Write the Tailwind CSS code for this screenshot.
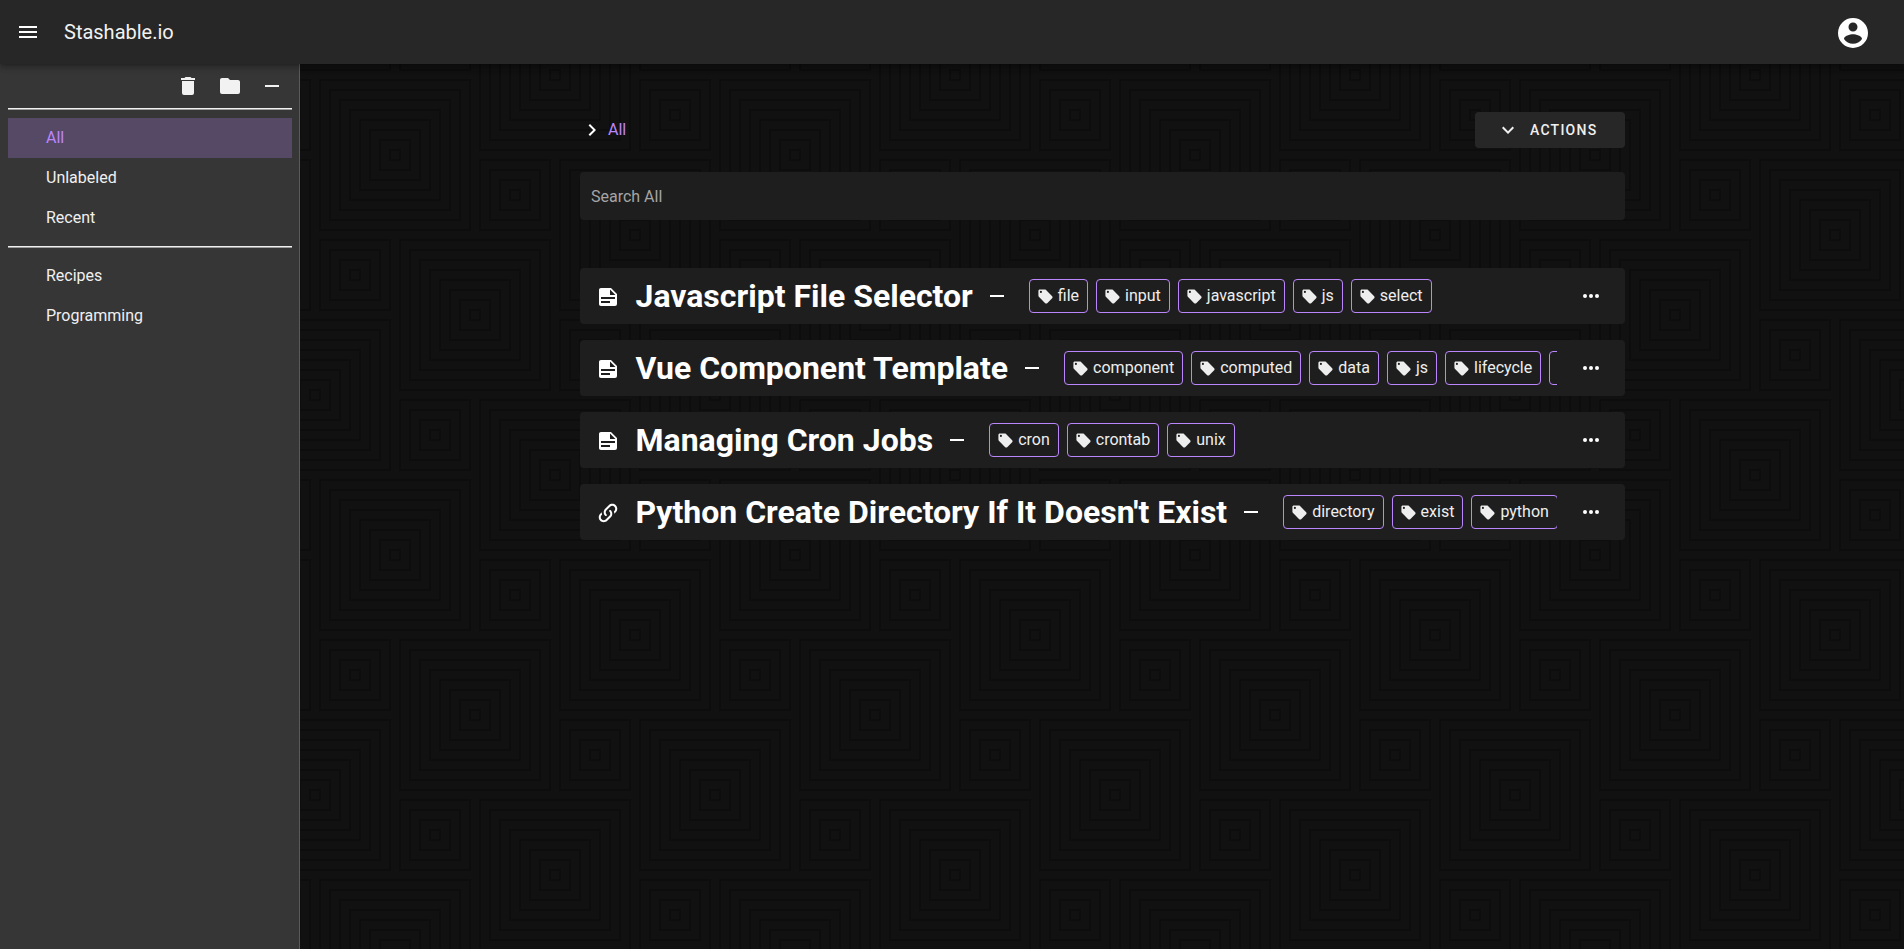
<!DOCTYPE html>
<html lang="en">
<head>
<meta charset="utf-8">
<title>Stashable.io</title>
<script src="https://cdn.jsdelivr.net/npm/@tailwindcss/browser@4"></script>
</head>
<body class="font-['Roboto',sans-serif] bg-[#111111] text-white">
<svg class="hidden" xmlns="http://www.w3.org/2000/svg">
  <symbol id="i-menu" viewBox="0 0 24 24"><path fill="currentColor" d="M3,6H21V8H3V6M3,11H21V13H3V11M3,16H21V18H3V16Z"/></symbol>
  <symbol id="i-account" viewBox="0 0 24 24"><path fill="currentColor" d="M12,19.2C9.5,19.2 7.29,17.92 6,16C6.03,14 10,12.9 12,12.9C14,12.9 17.97,14 18,16C16.71,17.92 14.5,19.2 12,19.2M12,5A3,3 0 0,1 15,8A3,3 0 0,1 12,11A3,3 0 0,1 9,8A3,3 0 0,1 12,5M12,2A10,10 0 0,0 2,12A10,10 0 0,0 12,22A10,10 0 0,0 22,12A10,10 0 0,0 12,2Z"/></symbol>
  <symbol id="i-delete" viewBox="0 0 24 24"><path fill="currentColor" d="M19,4H15.5L14.5,3H9.5L8.5,4H5V6H19M6,19A2,2 0 0,0 8,21H16A2,2 0 0,0 18,19V7H6V19Z"/></symbol>
  <symbol id="i-folder" viewBox="0 0 24 24"><path fill="currentColor" d="M10,4H4C2.89,4 2,4.89 2,6V18A2,2 0 0,0 4,20H20A2,2 0 0,0 22,18V8C22,6.89 21.1,6 20,6H12L10,4Z"/></symbol>
  <symbol id="i-minus" viewBox="0 0 24 24"><path fill="currentColor" d="M19,13H5V11H19V13Z"/></symbol>
  <symbol id="i-right" viewBox="0 0 24 24"><path fill="currentColor" d="M8.59,16.58L13.17,12L8.59,7.41L10,6L16,12L10,18L8.59,16.58Z"/></symbol>
  <symbol id="i-down" viewBox="0 0 24 24"><path fill="currentColor" d="M7.41,8.58L12,13.17L16.59,8.58L18,10L12,16L6,10L7.41,8.58Z"/></symbol>
  <symbol id="i-note" viewBox="0 0 24 24"><path fill="currentColor" d="M14,10H19.5L14,4.5V10M5,3H15L21,9V19A2,2 0 0,1 19,21H5C3.89,21 3,20.1 3,19V5C3,3.89 3.89,3 5,3M5,12V14H19V12H5M5,16V18H14V16H5Z"/></symbol>
  <symbol id="i-link" viewBox="0 0 24 24"><path fill="currentColor" d="M10.59,13.41C11,13.8 11,14.44 10.59,14.83C10.2,15.22 9.56,15.22 9.17,14.83C7.22,12.88 7.22,9.71 9.17,7.76V7.76L12.71,4.22C14.66,2.27 17.83,2.27 19.78,4.22C21.73,6.17 21.73,9.34 19.78,11.29L18.29,12.78C18.3,11.96 18.17,11.14 17.89,10.36L18.36,9.88C19.54,8.71 19.54,6.81 18.36,5.64C17.19,4.46 15.29,4.46 14.12,5.64L10.59,9.17C9.41,10.34 9.41,12.24 10.59,13.41M13.41,9.17C13.8,8.78 14.44,8.78 14.83,9.17C16.78,11.12 16.78,14.29 14.83,16.24V16.24L11.29,19.78C9.34,21.73 6.17,21.73 4.22,19.78C2.27,17.83 2.27,14.66 4.22,12.71L5.71,11.22C5.7,12.04 5.83,12.86 6.11,13.65L5.64,14.12C4.46,15.29 4.46,17.19 5.64,18.36C6.81,19.54 8.71,19.54 9.88,18.36L13.41,14.83C14.59,13.66 14.59,11.76 13.41,10.59C13,10.2 13,9.56 13.41,9.17Z"/></symbol>
  <symbol id="i-tag" viewBox="0 0 24 24"><path fill="currentColor" d="M5.5,7A1.5,1.5 0 0,1 4,5.5A1.5,1.5 0 0,1 5.5,4A1.5,1.5 0 0,1 7,5.5A1.5,1.5 0 0,1 5.5,7M21.41,11.58L12.41,2.58C12.05,2.22 11.55,2 11,2H4C2.89,2 2,2.89 2,4V11C2,11.55 2.22,12.05 2.59,12.41L11.58,21.41C11.95,21.77 12.45,22 13,22C13.55,22 14.05,21.77 14.41,21.41L21.41,14.41C21.78,14.05 22,13.55 22,13C22,12.45 21.77,11.95 21.41,11.58Z"/></symbol>
  <symbol id="i-dots" viewBox="0 0 24 24"><path fill="currentColor" d="M16,12A2,2 0 0,1 18,10A2,2 0 0,1 20,12A2,2 0 0,1 18,14A2,2 0 0,1 16,12M10,12A2,2 0 0,1 12,10A2,2 0 0,1 14,12A2,2 0 0,1 12,14A2,2 0 0,1 10,12M4,12A2,2 0 0,1 6,10A2,2 0 0,1 8,12A2,2 0 0,1 6,14A2,2 0 0,1 4,12Z"/></symbol>
</svg>

<div class="flex flex-col h-[949px] w-[1904px] overflow-hidden">
  <header class="relative z-10 h-16 shrink-0 bg-[#272727] shadow-[0_2px_4px_-1px_rgba(0,0,0,0.2),0_4px_5px_0_rgba(0,0,0,0.14),0_1px_10px_0_rgba(0,0,0,0.12)] flex items-center pl-4 pr-[33px]">
    <svg class="w-6 h-6"><use href="#i-menu"/></svg>
    <div class="ml-6 text-[20px] font-normal text-[#f2f2f2]">Stashable.io</div>
    <svg class="ml-auto w-9 h-9 mt-[2px]"><use href="#i-account"/></svg>
  </header>

  <div class="flex flex-1 min-h-0">
    <aside class="w-[300px] shrink-0 bg-[#363636] border-r border-[#5a5a5a] pl-2 pr-[7px] text-[16px] text-[#f0f0f0]">
      <div class="h-[44px] flex items-center justify-end gap-[18px] pr-[8px]">
        <svg class="w-6 h-6 text-[#f2f2f2]"><use href="#i-delete"/></svg>
        <svg class="w-6 h-6 text-[#f2f2f2]"><use href="#i-folder"/></svg>
        <svg class="w-6 h-6 text-[#f2f2f2]"><use href="#i-minus"/></svg>
      </div>
      <div class="h-[2px] border-t border-b border-t-[#f0f0f0] border-b-[#9c9c9c]"></div>
      <nav class="pt-2">
        <div class="h-10 flex items-center pl-[38px] bg-[#564965] text-[#bb86fc]">All</div>
        <div class="h-10 flex items-center pl-[38px]">Unlabeled</div>
        <div class="h-10 flex items-center pl-[38px]">Recent</div>
      </nav>
      <div class="h-[2px] border-t border-b border-t-[#f0f0f0] border-b-[#9c9c9c] mt-2"></div>
      <nav class="pt-2">
        <div class="h-10 flex items-center pl-[38px]">Recipes</div>
        <div class="h-10 flex items-center pl-[38px]">Programming</div>
      </nav>
    </aside>

    <main class="relative flex-1 min-w-0 overflow-hidden">
      <svg class="absolute inset-0 w-full h-full" xmlns="http://www.w3.org/2000/svg" aria-hidden="true">
        <defs>
          <g id="sq-small" fill="none" stroke="#0d0d0d" stroke-width="2">
            <rect x="-35" y="-35" width="70" height="70"/><rect x="-25" y="-25" width="50" height="50"/><rect x="-15" y="-15" width="30" height="30"/><rect x="-5" y="-5" width="10" height="10"/>
          </g>
          <g id="sq-big" fill="none" stroke="#0d0d0d" stroke-width="2">
            <rect x="-75" y="-75" width="150" height="150"/><rect x="-65" y="-65" width="130" height="130"/><rect x="-55" y="-55" width="110" height="110"/><rect x="-45" y="-45" width="90" height="90"/><rect x="-35" y="-35" width="70" height="70"/><rect x="-25" y="-25" width="50" height="50"/><rect x="-15" y="-15" width="30" height="30"/><rect x="-5" y="-5" width="10" height="10"/>
          </g>
          <pattern id="squares" width="400" height="400" patternUnits="userSpaceOnUse" patternTransform="translate(-300 -64)">
            <rect width="400" height="400" fill="#111111"/>
            <use href="#sq-big" x="395" y="155"/><use href="#sq-big" x="-5" y="155"/>
            <use href="#sq-big" x="235" y="235"/>
            <use href="#sq-big" x="75" y="315"/><use href="#sq-big" x="475" y="315"/>
            <use href="#sq-big" x="315" y="395"/><use href="#sq-big" x="315" y="-5"/>
            <use href="#sq-big" x="155" y="75"/><use href="#sq-big" x="155" y="475"/>
            <use href="#sq-small" x="115" y="195"/>
            <use href="#sq-small" x="355" y="275"/>
            <use href="#sq-small" x="195" y="355"/>
            <use href="#sq-small" x="35" y="35"/><use href="#sq-small" x="435" y="35"/><use href="#sq-small" x="35" y="435"/>
            <use href="#sq-small" x="275" y="115"/>
          </pattern>
        </defs>
        <rect width="100%" height="100%" fill="url(#squares)"/>
      </svg>

      <div class="relative w-[1045px] ml-[280px]">
        <div class="h-[108px] flex items-center pt-12 pb-6">
          <svg class="w-6 h-6"><use href="#i-right"/></svg>
          <span class="ml-1 text-[16px] text-[#bb86fc]">All</span>
          <button class="ml-auto h-9 w-[150px] rounded bg-[#272727] flex items-center pl-[21px] text-[14px] font-medium tracking-[1.25px] text-[#f0f0f0]">
            <svg class="w-6 h-6 mr-[10px]"><use href="#i-down"/></svg>ACTIONS
          </button>
        </div>
        <div class="h-12 rounded bg-[#1e1e1e] flex items-center px-[11px] pt-[1px] text-[16px] text-[#a5a5a5]">Search All</div>

        <div class="mt-12 flex flex-col gap-4">
          <div class="h-14 rounded bg-[#1e1e1e] flex items-center pl-4 pr-[22px]">
            <svg class="w-6 h-6 shrink-0 mt-[2px]"><use href="#i-note"/></svg>
            <div class="ml-[15.5px] text-[32px] font-bold whitespace-nowrap">Javascript File Selector</div>
            <svg class="w-6 h-6 shrink-0 ml-3"><use href="#i-minus"/></svg>
            <div class="ml-5 flex-1 min-w-0 flex gap-2 overflow-hidden">
              <div class="shrink-0 h-[34px] pl-[7px] pr-2 flex items-center rounded border border-[#bb86fc] text-[16px] text-[#eeeeee]"><svg class="w-[17px] h-[17px] mr-1"><use href="#i-tag"/></svg>file</div>
              <div class="shrink-0 h-[34px] pl-[7px] pr-2 flex items-center rounded border border-[#bb86fc] text-[16px] text-[#eeeeee]"><svg class="w-[17px] h-[17px] mr-1"><use href="#i-tag"/></svg>input</div>
              <div class="shrink-0 h-[34px] pl-[7px] pr-2 flex items-center rounded border border-[#bb86fc] text-[16px] text-[#eeeeee]"><svg class="w-[17px] h-[17px] mr-1"><use href="#i-tag"/></svg>javascript</div>
              <div class="shrink-0 h-[34px] pl-[7px] pr-2 flex items-center rounded border border-[#bb86fc] text-[16px] text-[#eeeeee]"><svg class="w-[17px] h-[17px] mr-1"><use href="#i-tag"/></svg>js</div>
              <div class="shrink-0 h-[34px] pl-[7px] pr-2 flex items-center rounded border border-[#bb86fc] text-[16px] text-[#eeeeee]"><svg class="w-[17px] h-[17px] mr-1"><use href="#i-tag"/></svg>select</div>
            </div>
            <svg class="w-6 h-6 shrink-0 ml-[22px]"><use href="#i-dots"/></svg>
          </div>

          <div class="h-14 rounded bg-[#1e1e1e] flex items-center pl-4 pr-[22px]">
            <svg class="w-6 h-6 shrink-0 mt-[2px]"><use href="#i-note"/></svg>
            <div class="ml-[15.5px] text-[32px] font-bold whitespace-nowrap">Vue Component Template</div>
            <svg class="w-6 h-6 shrink-0 ml-3"><use href="#i-minus"/></svg>
            <div class="ml-5 flex-1 min-w-0 flex gap-2 overflow-hidden">
              <div class="shrink-0 h-[34px] pl-[7px] pr-2 flex items-center rounded border border-[#bb86fc] text-[16px] text-[#eeeeee]"><svg class="w-[17px] h-[17px] mr-1"><use href="#i-tag"/></svg>component</div>
              <div class="shrink-0 h-[34px] pl-[7px] pr-2 flex items-center rounded border border-[#bb86fc] text-[16px] text-[#eeeeee]"><svg class="w-[17px] h-[17px] mr-1"><use href="#i-tag"/></svg>computed</div>
              <div class="shrink-0 h-[34px] pl-[7px] pr-2 flex items-center rounded border border-[#bb86fc] text-[16px] text-[#eeeeee]"><svg class="w-[17px] h-[17px] mr-1"><use href="#i-tag"/></svg>data</div>
              <div class="shrink-0 h-[34px] pl-[7px] pr-2 flex items-center rounded border border-[#bb86fc] text-[16px] text-[#eeeeee]"><svg class="w-[17px] h-[17px] mr-1"><use href="#i-tag"/></svg>js</div>
              <div class="shrink-0 h-[34px] pl-[7px] pr-2 flex items-center rounded border border-[#bb86fc] text-[16px] text-[#eeeeee]"><svg class="w-[17px] h-[17px] mr-1"><use href="#i-tag"/></svg>lifecycle</div>
              <div class="shrink-0 h-[34px] w-[60px] rounded border border-[#bb86fc]"></div>
            </div>
            <svg class="w-6 h-6 shrink-0 ml-[22px]"><use href="#i-dots"/></svg>
          </div>

          <div class="h-14 rounded bg-[#1e1e1e] flex items-center pl-4 pr-[22px]">
            <svg class="w-6 h-6 shrink-0 mt-[2px]"><use href="#i-note"/></svg>
            <div class="ml-[15.5px] text-[32px] font-bold whitespace-nowrap">Managing Cron Jobs</div>
            <svg class="w-6 h-6 shrink-0 ml-3"><use href="#i-minus"/></svg>
            <div class="ml-5 flex-1 min-w-0 flex gap-2 overflow-hidden">
              <div class="shrink-0 h-[34px] pl-[7px] pr-2 flex items-center rounded border border-[#bb86fc] text-[16px] text-[#eeeeee]"><svg class="w-[17px] h-[17px] mr-1"><use href="#i-tag"/></svg>cron</div>
              <div class="shrink-0 h-[34px] pl-[7px] pr-2 flex items-center rounded border border-[#bb86fc] text-[16px] text-[#eeeeee]"><svg class="w-[17px] h-[17px] mr-1"><use href="#i-tag"/></svg>crontab</div>
              <div class="shrink-0 h-[34px] pl-[7px] pr-2 flex items-center rounded border border-[#bb86fc] text-[16px] text-[#eeeeee]"><svg class="w-[17px] h-[17px] mr-1"><use href="#i-tag"/></svg>unix</div>
            </div>
            <svg class="w-6 h-6 shrink-0 ml-[22px]"><use href="#i-dots"/></svg>
          </div>

          <div class="h-14 rounded bg-[#1e1e1e] flex items-center pl-4 pr-[22px]">
            <svg class="w-6 h-6 shrink-0 mt-[2px]"><use href="#i-link"/></svg>
            <div class="ml-[15.5px] text-[32px] font-bold whitespace-nowrap">Python Create Directory If It Doesn't Exist</div>
            <svg class="w-6 h-6 shrink-0 ml-3"><use href="#i-minus"/></svg>
            <div class="ml-5 flex-1 min-w-0 flex gap-2 overflow-hidden">
              <div class="shrink-0 h-[34px] pl-[7px] pr-2 flex items-center rounded border border-[#bb86fc] text-[16px] text-[#eeeeee]"><svg class="w-[17px] h-[17px] mr-1"><use href="#i-tag"/></svg>directory</div>
              <div class="shrink-0 h-[34px] pl-[7px] pr-2 flex items-center rounded border border-[#bb86fc] text-[16px] text-[#eeeeee]"><svg class="w-[17px] h-[17px] mr-1"><use href="#i-tag"/></svg>exist</div>
              <div class="shrink-0 h-[34px] pl-[7px] pr-2 flex items-center rounded border border-[#bb86fc] text-[16px] text-[#eeeeee]"><svg class="w-[17px] h-[17px] mr-1"><use href="#i-tag"/></svg>python</div>
            </div>
            <svg class="w-6 h-6 shrink-0 ml-[22px]"><use href="#i-dots"/></svg>
          </div>
        </div>
      </div>
    </main>
  </div>
</div>
</body>
</html>
